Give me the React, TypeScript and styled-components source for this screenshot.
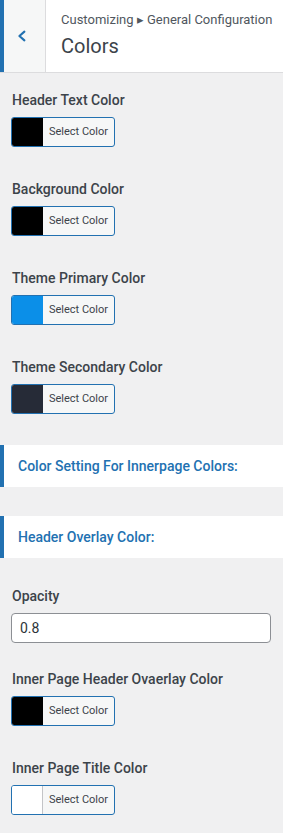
import styled, { createGlobalStyle } from 'styled-components';

const GlobalStyle = createGlobalStyle`
    html, body {
        margin: 0;
        padding: 0;
        background: #f0f0f1;
    }
    body {
        font-family: Roboto, "Liberation Sans", sans-serif;
        -webkit-font-smoothing: antialiased;
    }
`;

const Panel = styled.div`
    width: 283px;
    min-height: 833px;
    background: #f0f0f1;
    overflow: hidden;
`;

const Header = styled.div`
    display: flex;
    height: 72px;
    background: #fff;
    border-bottom: 1px solid #dcdcde;
`;

const BackButton = styled.button`
    width: 46px;
    flex: none;
    border: none;
    border-left: 4px solid #2271b1;
    border-right: 1px solid #dcdcde;
    background: #f6f7f7;
    color: #2271b1;
    display: flex;
    align-items: center;
    justify-content: center;
    padding: 0 5px 0 0;
    svg {
        width: 16px;
        height: 16px;
    }
`;

const TitleArea = styled.div`
    padding: 11px 0 0 15px;
    display: flex;
    flex-direction: column;
`;

const Crumb = styled.span`
    font-size: 13px;
    line-height: 18px;
    color: #50575e;
`;

const Title = styled.h2`
    margin: 4px 0 0;
    font-size: 20px;
    font-weight: 400;
    line-height: 26px;
    color: #3c434a;
`;

const Controls = styled.div`
    padding: 18px 12px 0 11px;
    display: flex;
    flex-direction: column;
`;

const Control = styled.div<{ $gap?: number }>`
    margin-bottom: ${(p) => p.$gap ?? 33}px;
`;

const Label = styled.div`
    font-size: 14px;
    font-weight: 500;
    line-height: 18px;
    color: #3c434a;
    margin: 0 0 8px 1px;
`;

const ColorButton = styled.button`
    display: flex;
    height: 30px;
    width: 104px;
    padding: 0;
    border: 1px solid #2271b1;
    border-radius: 3px;
    overflow: hidden;
    background: #f6f7f7;
`;

const Swatch = styled.span<{ $color: string }>`
    width: 30px;
    height: 100%;
    background: ${(p) => p.$color};
    border-right: 1px solid ${(p) => (p.$color === '#ffffff' ? '#c3c4c7' : p.$color)};
`;

const ButtonText = styled.span`
    flex: 1;
    font-family: Roboto, "Liberation Sans", sans-serif;
    font-size: 11px;
    line-height: 28px;
    color: #3c434a;
    text-align: center;
`;

const SectionBar = styled.div<{ $gap: number }>`
    margin: 0 -12px ${(p) => p.$gap}px -11px;
    height: 42px;
    background: #fff;
    border-left: 4px solid #2271b1;
    display: flex;
    align-items: center;
    padding-left: 14px;
    font-size: 14px;
    font-weight: 500;
    color: #2271b1;
`;

const TextInput = styled.input`
    box-sizing: border-box;
    width: 260px;
    height: 30px;
    border: 1px solid #8c8f94;
    border-radius: 4px;
    padding: 0 8px;
    font-family: Roboto, "Liberation Sans", sans-serif;
    font-size: 14px;
    color: #2c3338;
    background: #fff;
`;

const ChevronLeft = () => (
    <svg viewBox="0 0 20 20" fill="none" stroke="currentColor" strokeWidth="2.6" strokeLinecap="round" strokeLinejoin="round">
        <polyline points="13,4.5 6.75,10 13,15.5" />
    </svg>
);

const ColorControl = ({ label, color, gap }: { label: string; color: string; gap?: number }) => (
    <Control $gap={gap}>
        <Label>{label}</Label>
        <ColorButton>
            <Swatch $color={color} />
            <ButtonText>Select Color</ButtonText>
        </ColorButton>
    </Control>
);

function App() {
    return (
        <Panel>
            <GlobalStyle />
            <Header>
                <BackButton>
                    <ChevronLeft />
                </BackButton>
                <TitleArea>
                    <Crumb>Customizing ▸ General Configuration</Crumb>
                    <Title>Colors</Title>
                </TitleArea>
            </Header>
            <Controls>
                <ColorControl label="Header Text Color" color="#000000" />
                <ColorControl label="Background Color" color="#000000" />
                <ColorControl label="Theme Primary Color" color="#0b8fe8" />
                <ColorControl label="Theme Secondary Color" color="#262b37" gap={31} />
                <SectionBar $gap={29}>Color Setting For Innerpage Colors:</SectionBar>
                <SectionBar $gap={29}>Header Overlay Color:</SectionBar>
                <Control $gap={27}>
                    <Label>Opacity</Label>
                    <TextInput defaultValue="0.8" />
                </Control>
                <ColorControl label="Inner Page Header Ovaerlay Color" color="#000000" />
                <ColorControl label="Inner Page Title Color" color="#ffffff" />
            </Controls>
        </Panel>
    );
}

export default App;
